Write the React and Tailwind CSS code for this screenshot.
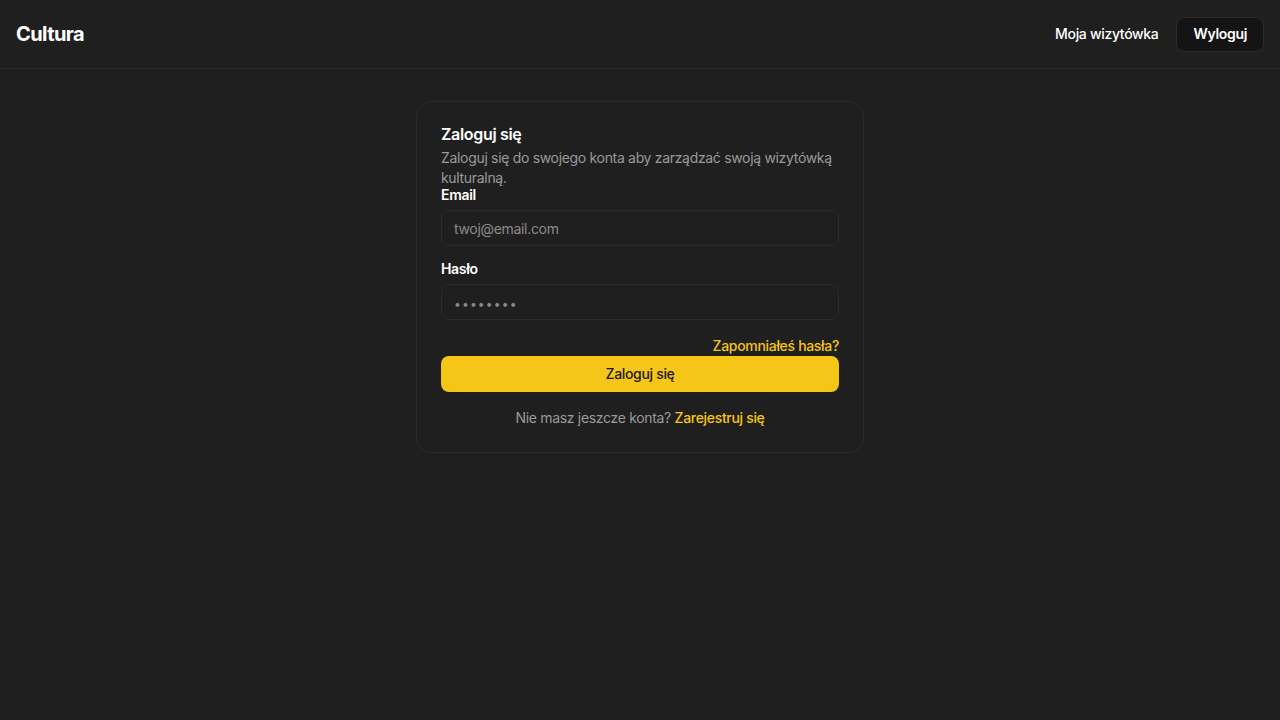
export default function App() {
  return (
    <div className="min-h-screen bg-[#1f1f1f] text-white tracking-[-0.02em]" style={{ fontFamily: 'Inter, "Noto Sans", sans-serif' }}>
      {/* Top bar */}
      <header className="h-[69px] px-4 flex items-center justify-between border-b border-[#282828]">
        <h1 className="text-xl font-bold tracking-[-0.03em]">Cultura</h1>
        <nav className="flex items-center gap-2">
          <a className="px-2.5 py-2 text-sm font-medium">Moja wizytówka</a>
          <button className="h-[35px] px-4 rounded-lg bg-[#141414] border border-[#2c2c2c] text-sm font-semibold">
            Wyloguj
          </button>
        </nav>
      </header>

      <main className="flex justify-center pt-8">
        <div className="w-[448px] rounded-2xl border border-[#2c2c2c] bg-[#1f1f1f] p-6">
          <h2 className="text-base font-semibold leading-4">Zaloguj się</h2>
          <p className="text-sm text-[#9a9a9a] leading-5 mt-[6px]">
            Zaloguj się do swojego konta aby zarządzać swoją wizytówką kulturalną.
          </p>

          <div className="flex flex-col gap-2">
            <label className="text-sm font-semibold leading-[14px]">Email</label>
            <input
              className="h-9 w-full rounded-lg border border-[#2c2c2c] bg-[#1f1f1f] px-3 text-sm text-white placeholder:text-[#8a8a8a] outline-none"
              placeholder="twoj@email.com"
            />
          </div>

          <div className="flex flex-col gap-2 mt-4">
            <label className="text-sm font-semibold leading-[14px]">Hasło</label>
            <input
              type="password"
              className="h-9 w-full rounded-lg border border-[#2c2c2c] bg-[#1f1f1f] px-3 text-sm text-white placeholder:text-[#8a8a8a] placeholder:text-xs placeholder:tracking-[0.1em] outline-none"
              placeholder="••••••••"
            />
          </div>

          <div className="flex justify-end mt-4">
            <a className="text-sm font-medium text-[#f5c518] leading-5">Zapomniałeś hasła?</a>
          </div>

          <button className="h-9 w-full rounded-lg bg-[#f5c518] text-sm font-medium text-[#1a1a1a]">
            Zaloguj się
          </button>

          <p className="text-sm text-center text-[#9a9a9a] leading-5 mt-4">
            Nie masz jeszcze konta? <a className="font-medium text-[#f5c518]">Zarejestruj się</a>
          </p>
        </div>
      </main>
    </div>
  )
}
